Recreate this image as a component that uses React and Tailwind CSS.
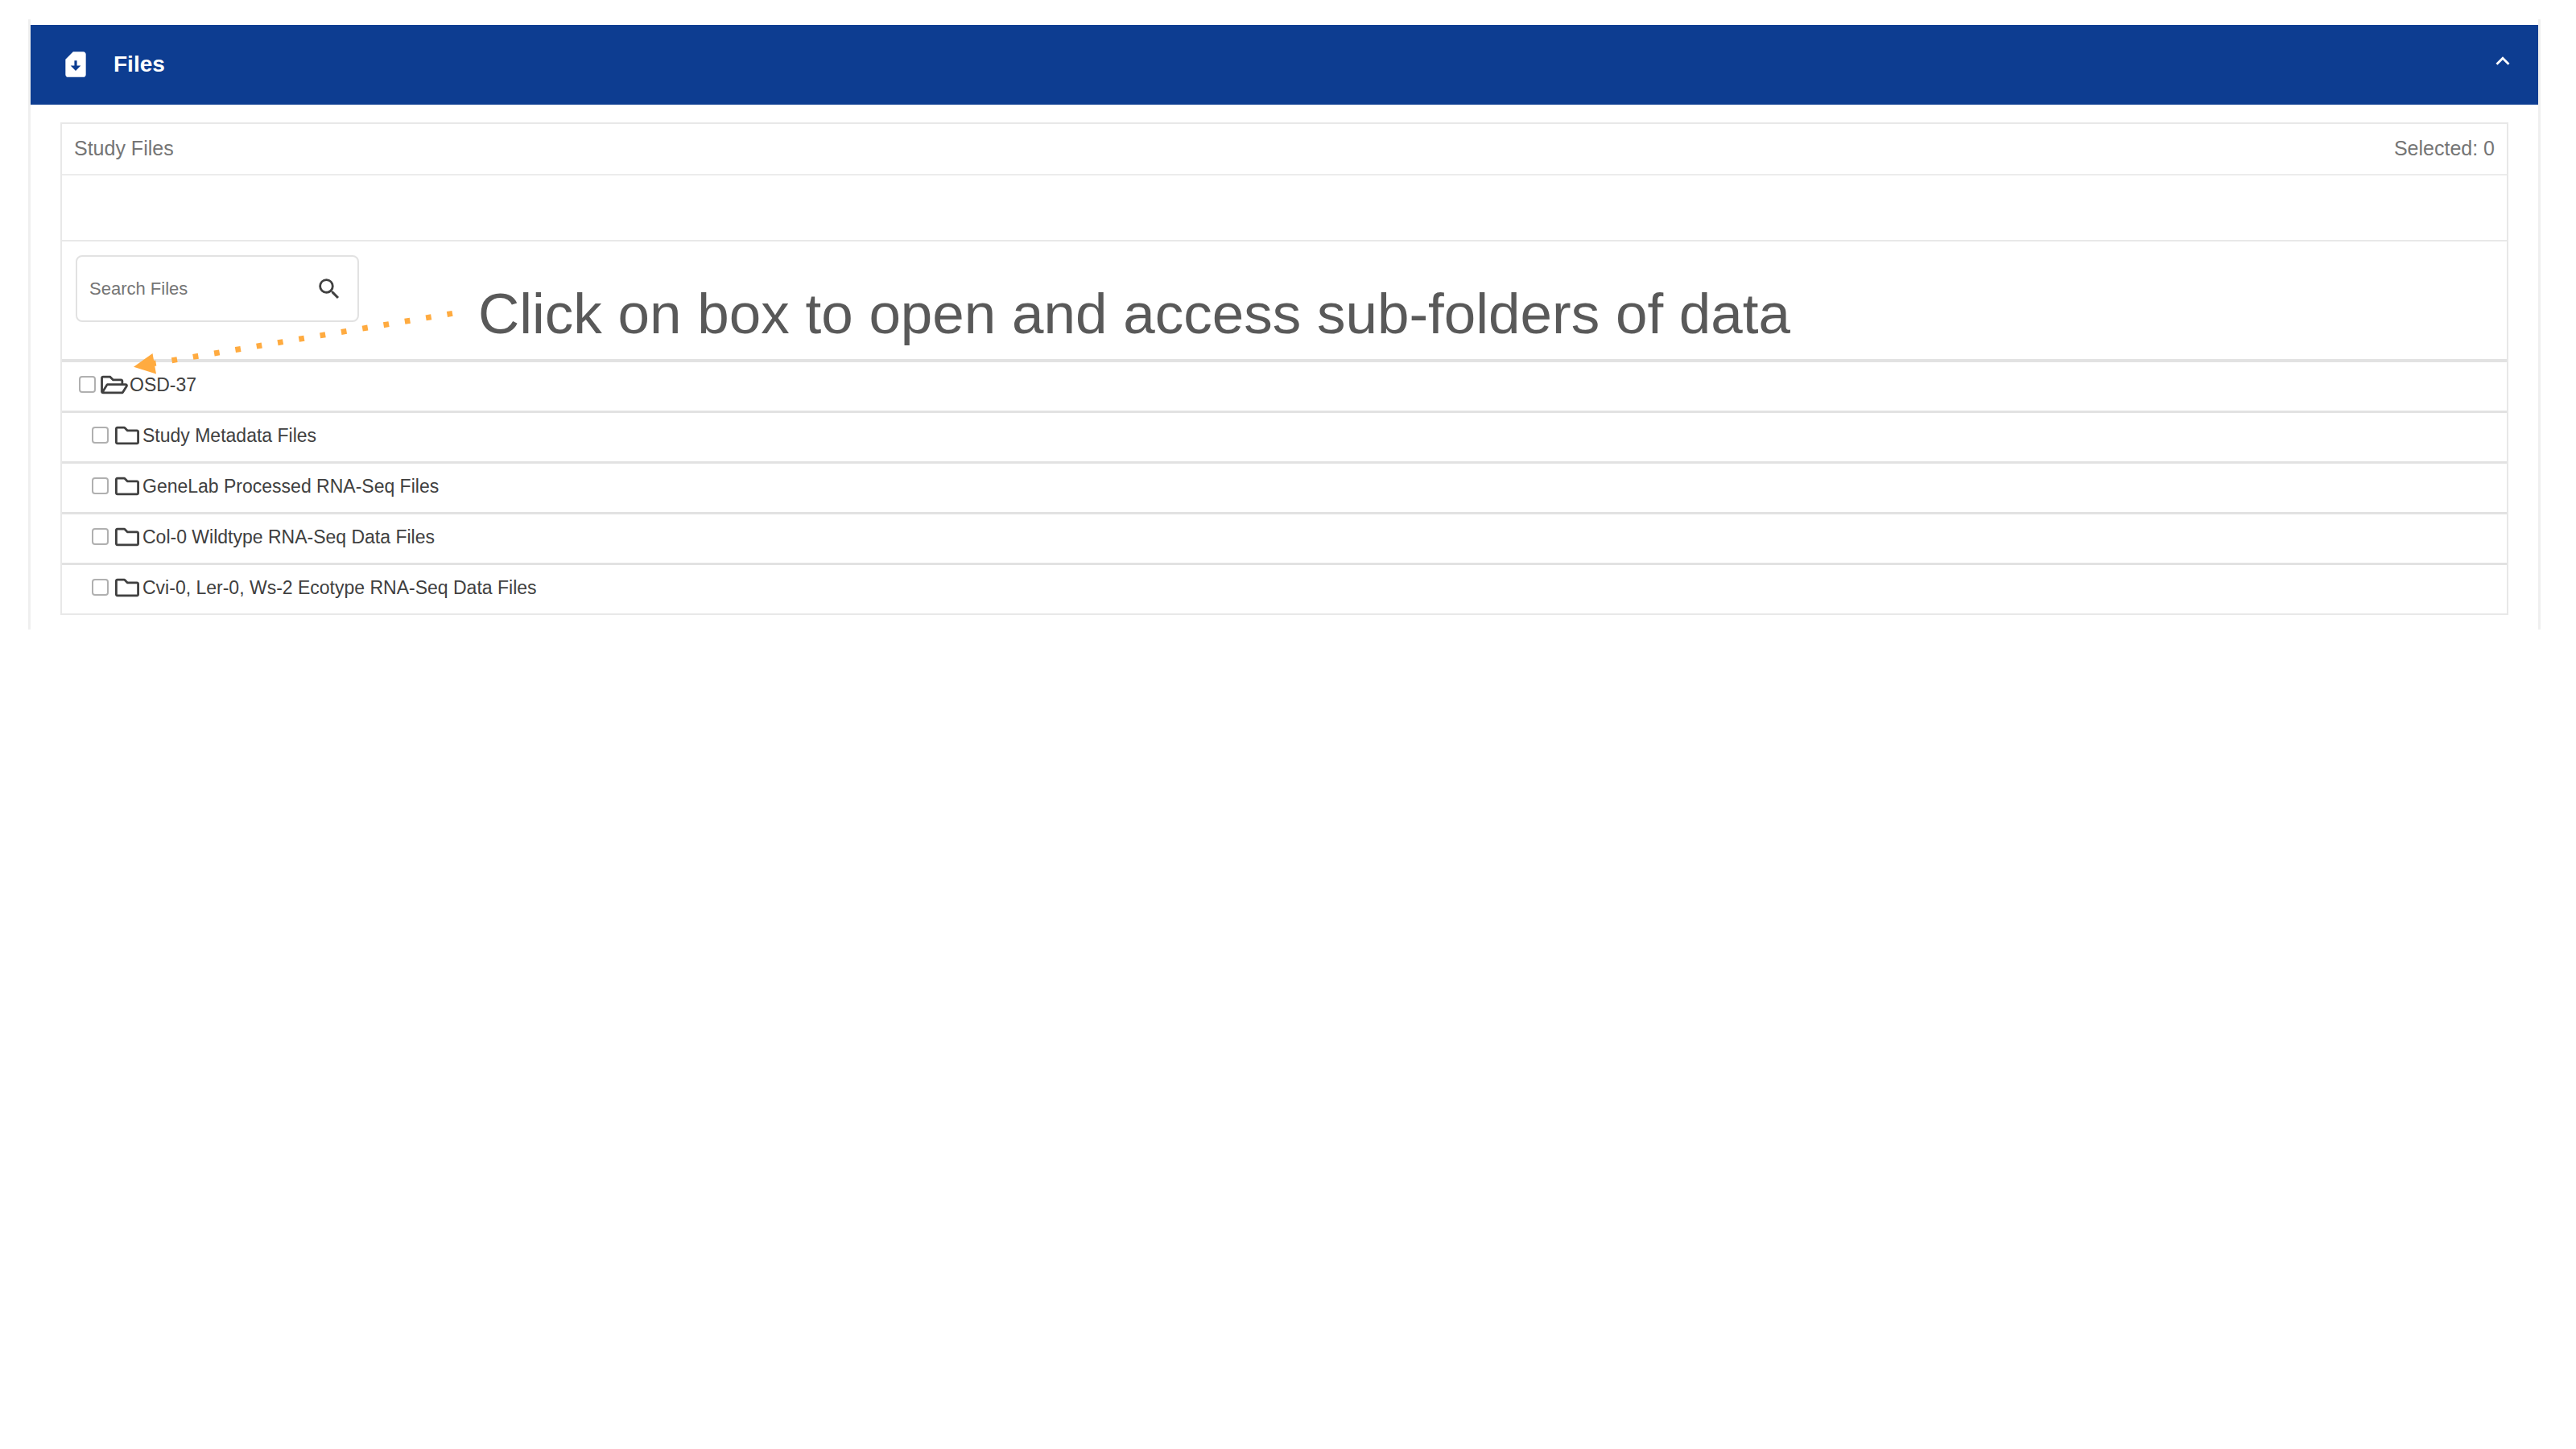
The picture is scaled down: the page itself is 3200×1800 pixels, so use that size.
import React from "react";
import { MdSimCardDownload, MdExpandLess, MdSearch } from "react-icons/md";
import { FaRegFolder, FaRegFolderOpen } from "react-icons/fa";

const folders = [
  { id: "metadata", name: "Study Metadata Files" },
  { id: "genelab", name: "GeneLab Processed RNA-Seq Files" },
  { id: "col0", name: "Col-0 Wildtype RNA-Seq Data Files" },
  { id: "ecotype", name: "Cvi-0, Ler-0, Ws-2 Ecotype RNA-Seq Data Files" },
];

function Row({ id, name, root }) {
  return (
    <li
      className={
        root
          ? "flex h-16 items-center border-t-4 border-[#e2e2e2] pb-1 pl-[21px]"
          : "flex h-[63px] items-center border-t-[3px] border-[#e2e2e2] pb-1 pl-[37px]"
      }
    >
      <input
        id={id}
        type="checkbox"
        className="mb-0.5 size-[21px] shrink-0 appearance-none rounded border-2 border-[#b0b0b0] bg-white checked:bg-[#0d3d91]"
      />
      {root ? (
        <label htmlFor={id} className="ml-1.5 flex items-center gap-0.5 text-[23px] leading-8 text-[#404040]">
          <FaRegFolderOpen className="h-[30px] w-[34px] shrink-0" />
          {name}
        </label>
      ) : (
        <label htmlFor={id} className="ml-2 flex items-center gap-1 text-[23px] leading-8 text-[#404040]">
          <FaRegFolder className="size-[30px] shrink-0" />
          {name}
        </label>
      )}
    </li>
  );
}

function Callout() {
  return (
    <div className="pointer-events-none absolute top-[350px] left-[164px] flex items-start">
      <svg width="400" height="120" viewBox="164 350 400 120" className="shrink-0" aria-hidden="true">
        <line x1="562" y1="389.4" x2="188" y2="452" stroke="#ffab40" strokeWidth="7" strokeDasharray="6.67 20" />
        <path d="M166 455.8 189.5 439 194 464.5Z" fill="#ffab40" />
      </svg>
      <p className="ml-[30px] text-[71px] leading-[80px] whitespace-nowrap text-[#595959]">
        Click on box to open and access sub-folders of data
      </p>
    </div>
  );
}

export default function App() {
  return (
    <main className="relative min-h-screen bg-white pt-6 pr-11 pl-[35px] font-['Liberation_Sans',Arial,sans-serif]">
      <section className="border-x-[3px] border-[#efefef] pt-[7px] pb-[18px]">
        <header className="flex h-[99px] items-start justify-between bg-[#0d3d91] pt-7 pr-[27px] pl-[37px] text-white">
          <h1 className="flex items-center gap-7 text-[28px] leading-[42px] font-bold">
            <MdSimCardDownload className="size-[38px]" />
            Files
          </h1>
          <button type="button" aria-label="Collapse files">
            <MdExpandLess className="size-[34px]" />
          </button>
        </header>
        <div className="mx-[37px] mt-[22px] border-2 border-[#e8e8e8]">
          <div className="flex h-[62px] items-center justify-between px-[15px] pb-0.5 text-[25px] leading-8 text-[#757575]">
            <h2>Study Files</h2>
            <span>Selected: 0</span>
          </div>
          <div className="h-[82px] border-t-2 border-[#ececec]" />
          <div className="h-[148px] border-t-2 border-[#e8e8e8] pt-[17px] pl-[17px]">
            <div className="flex h-[83px] w-[352px] items-center justify-between rounded-lg border-2 border-[#e2e2e2] pr-[18px] pl-[15px]">
              <input
                type="search"
                aria-label="Search Files"
                placeholder="Search Files"
                className="w-60 bg-transparent text-[22px] leading-8 outline-none placeholder:text-[#757575]"
              />
              <button type="button" aria-label="Search" className="text-[#404040]">
                <MdSearch className="size-[34px]" />
              </button>
            </div>
          </div>
          <ul>
            <Row id="osd-37" name="OSD-37" root />
            {folders.map((folder) => (
              <Row key={folder.id} {...folder} />
            ))}
          </ul>
        </div>
      </section>
      <Callout />
    </main>
  );
}
